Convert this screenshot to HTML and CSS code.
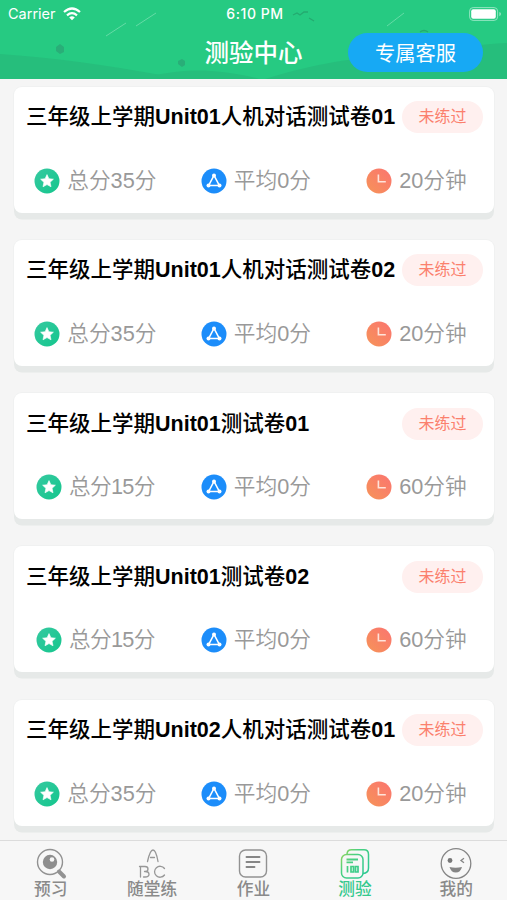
FILE: index.html
```html
<!DOCTYPE html>
<html lang="zh-CN">
<head>
<meta charset="utf-8">
<title>测验中心</title>
<link rel="stylesheet" href="styles.css">
</head>
<body>
<svg width="0" height="0" class="defs">
  <defs>
    <linearGradient id="gs" x1="0" y1="0" x2="1" y2="1"><stop offset="0" stop-color="#36c9a0"/><stop offset="1" stop-color="#14c68d"/></linearGradient>
    <linearGradient id="gc" x1="1" y1="0" x2="0" y2="1"><stop offset="0" stop-color="#fb7470"/><stop offset="1" stop-color="#f69458"/></linearGradient>
    <linearGradient id="gq" x1="0" y1="0" x2="28" y2="22" gradientUnits="userSpaceOnUse"><stop offset="0" stop-color="#b5d84b"/><stop offset=".45" stop-color="#4bd080"/><stop offset="1" stop-color="#2fc991"/></linearGradient>
    <symbol id="star" viewBox="0 0 26 26"><circle cx="13" cy="13" r="12.5" fill="url(#gs)"/><path d="M13 6.6l1.9 4.1 4.5.5-3.3 3.1.9 4.5-4-2.2-4 2.2.9-4.5-3.3-3.1 4.5-.5z" fill="#fff" stroke="#fff" stroke-width=".6" stroke-linejoin="round"/></symbol>
    <symbol id="avg" viewBox="0 0 26 26"><circle cx="13" cy="13" r="12.5" fill="#1c8dfa"/><path d="M13 7.4L7.6 17.6h10.8z" fill="none" stroke="#fff" stroke-width="1.5"/><g fill="#fff"><circle cx="13" cy="7.4" r="2"/><circle cx="7.5" cy="17.6" r="2"/><circle cx="18.5" cy="17.6" r="2"/></g></symbol>
    <symbol id="clock" viewBox="0 0 26 26"><circle cx="13" cy="13" r="12.5" fill="url(#gc)"/><path d="M12.4 6.6v7.2h7.4" fill="none" stroke="#ffe3da" stroke-width="1.6"/></symbol>
  </defs>
</svg>
<div class="screen">
  <header class="header">
    <svg class="scene" viewBox="0 0 507 79">
      <path d="M0 54C60 58 110 66 155 74L185 79H0z" fill="#26be7c"/>
      <path d="M155 75C185 70 210 67 260 79H160z" fill="#26be7c"/>
      <path d="M265 79C320 62 350 59 400 54S480 44 507 43V79z" fill="#26be7c"/>
      <path d="M106 36l20-13M136 26l20-13M387 26l17-13" stroke="#65dba6" stroke-width="1"/>
      <path d="M60 44l4 3v5l-4 2-4-3v-4zM182 59l3 2v4l-3 2-4-3v-3z" fill="#29ae78"/>
      <path d="M293 15l4-2 3 2 4-3 4 0M309 18l5 3M420 32q4-3 8 0" fill="none" stroke="#24aa70" stroke-width="1.3"/>
    </svg>
    <div class="status">
      <span class="carrier">Carrier<svg width="18" height="14" viewBox="0 0 18 14"><g fill="none" stroke="#fff" stroke-width="2.2"><path d="M1 5Q9-2 17 5M4 8.3q5-4.3 10 0"/></g><path d="M6.2 10.4q2.8-2.2 5.6 0L9 13.3z" fill="#fff"/></svg></span>
      <span class="time">6:10 PM</span>
      <svg class="battery" width="33" height="14" viewBox="0 0 33 14"><rect x=".6" y=".6" width="28" height="12.8" rx="3.5" fill="none" stroke="#92e5c1"/><rect x="2.2" y="2.2" width="24.6" height="9.6" rx="2" fill="#fff"/><path d="M30.3 5v4.2q1.7-.7 1.7-2.1t-1.7-2.1z" fill="#92e5c1"/></svg>
    </div>
    <div class="nav"><h1>测验中心</h1><button class="service">专属客服</button></div>
  </header>
  <main class="list">
    <article class="card"><div class="top"><h2>三年级上学期<b>Unit01</b>人机对话测试卷<b>01</b></h2><span class="tag">未练过</span></div>
      <div class="meta"><span><svg><use href="#star"/></svg>总分35分</span><span><svg><use href="#avg"/></svg>平均0分</span><span><svg><use href="#clock"/></svg>20分钟</span></div></article>
    <article class="card"><div class="top"><h2>三年级上学期<b>Unit01</b>人机对话测试卷<b>02</b></h2><span class="tag">未练过</span></div>
      <div class="meta"><span><svg><use href="#star"/></svg>总分35分</span><span><svg><use href="#avg"/></svg>平均0分</span><span><svg><use href="#clock"/></svg>20分钟</span></div></article>
    <article class="card"><div class="top"><h2>三年级上学期<b>Unit01</b>测试卷<b>01</b></h2><span class="tag">未练过</span></div>
      <div class="meta"><span class="tight"><svg><use href="#star"/></svg>总分15分</span><span><svg><use href="#avg"/></svg>平均0分</span><span><svg><use href="#clock"/></svg>60分钟</span></div></article>
    <article class="card"><div class="top"><h2>三年级上学期<b>Unit01</b>测试卷<b>02</b></h2><span class="tag">未练过</span></div>
      <div class="meta"><span class="tight"><svg><use href="#star"/></svg>总分15分</span><span><svg><use href="#avg"/></svg>平均0分</span><span><svg><use href="#clock"/></svg>60分钟</span></div></article>
    <article class="card"><div class="top"><h2>三年级上学期<b>Unit02</b>人机对话测试卷<b>01</b></h2><span class="tag">未练过</span></div>
      <div class="meta"><span><svg><use href="#star"/></svg>总分35分</span><span><svg><use href="#avg"/></svg>平均0分</span><span><svg><use href="#clock"/></svg>20分钟</span></div></article>
  </main>
  <nav class="tabs">
    <a class="tab"><svg viewBox="0 0 32 32"><circle cx="15" cy="14" r="12.5" fill="none" stroke="#929292" stroke-width="1.4"/><circle cx="15" cy="14" r="7.2" fill="#8e8e8e"/><circle cx="17" cy="11.5" r="2.3" fill="#f7f7f7"/><path d="M24 23.5l5 5" stroke="#929292" stroke-width="4" stroke-linecap="round"/></svg>预习</a>
    <a class="tab"><svg viewBox="0 0 32 32"><g fill="none" stroke="#979797" stroke-width="1.3" stroke-linecap="round"><path d="M11.5 13.5Q14 2 17 2t5 11.5M14.5 9.5h4"/><path d="M4.5 29V18.5M3.5 18.500H9Q12 18.500 12 21T9 23.500H8.500M9 23.500Q13 23.500 13 26.200T9 29H7.500"/><path d="M28.500 20.500A5.500 5.500 0 1 0 28.500 27"/></g></svg>随堂练</a>
    <a class="tab"><svg viewBox="0 0 32 32"><rect x="2.500" y="2" width="27" height="27" rx="6" fill="none" stroke="#929292" stroke-width="1.4"/><path d="M9.500 9h13M9.500 14h13M9.500 19h8" stroke="#868686" stroke-width="1.9" stroke-linecap="round"/></svg>作业</a>
    <a class="tab active"><svg viewBox="0 0 32 32"><g fill="none" stroke="url(#gq)" stroke-width="1.500"><path d="M8 6.500Q8 1.800 12.500 1.800H25Q29.500 1.800 29.500 6.500V20Q29.500 25 24 25.500"/><rect x="2.500" y="6.500" width="21.500" height="23.500" rx="5"/><path d="M7.500 11.500H19M7.500 14.300H14" stroke-width="1.800"/><path d="M8.500 18v6.500M12 18.500h2.500v5.500H12zM16.500 18.500H19v5.500h-2.500z" stroke-width="1.700"/></g></svg>测验</a>
    <a class="tab"><svg viewBox="0 0 32 32"><circle cx="16" cy="15.5" r="14.800" fill="none" stroke="#858585" stroke-width="1.300"/><circle cx="10" cy="12.5" r="2.400" fill="#777"/><path d="M24 10.300l-3 2.200 3 2.200" fill="none" stroke="#858585" stroke-width="1.300"/><path d="M9.500 19Q15.500 20.500 22 19Q20.500 24.500 15.800 24.500T9.500 19z" fill="#858585"/></svg>我的</a>
  </nav>
</div>
</body>
</html>
```

FILE: styles.css
```css
* { box-sizing: border-box; }
body { margin: 0; background: #f5f5f5; font-family: "Liberation Sans", "Noto Sans CJK SC", sans-serif; }
.defs { position: absolute; }
.screen { width: 507px; height: 900px; display: flex; flex-direction: column; overflow: hidden; }
.header { height: 79px; flex: none; position: relative; background: #26ca82; color: #fff; }
.scene { position: absolute; inset: 0; width: 507px; height: 79px; }
.status { position: relative; height: 27px; display: grid; grid-template-columns: 1fr auto 1fr; align-items: center; padding: 0 5px 0 8px; font: 14.5px/27px Inter, sans-serif; }
.carrier { display: flex; align-items: center; gap: 7px; }
.time { font-weight: 500; font-size: 14px; letter-spacing: .55px; }
.battery { justify-self: end; }
.nav { position: relative; height: 50px; display: grid; grid-template-columns: 1fr auto 1fr; align-items: center; padding: 0 24px; }
.nav h1 { grid-column: 2; margin: 0; font: 500 24.5px/38px "Noto Sans CJK SC", sans-serif; }
.service { justify-self: end; width: 135px; height: 39px; border: 0; border-radius: 20px; padding: 0; background: #17a9f4; color: #fff; font: 20.3px/37px "Noto Sans CJK SC", sans-serif; }
.list { flex: 1; min-height: 0; padding: 7.5px 13px 0 14px; display: flex; flex-direction: column; gap: 27.3px; overflow: hidden; }
.card { flex: none; height: 126px; background: #fff; border-radius: 8px; box-shadow: 0 6.5px 0 #e6e9e8, 0 0 0 1px #f0f1f1; padding-top: 13.5px; }
.top { display: flex; justify-content: space-between; align-items: center; height: 34px; padding: 0 11px 0 12px; }
.top h2 { margin: 0; font-size: 21.5px; line-height: 34px; font-weight: 500; color: #000; white-space: nowrap; }
.top b { font-weight: bold; }
.tag { width: 81px; height: 32px; flex: none; border-radius: 16px; background: #fff0ef; color: #fb806d; font-size: 16px; line-height: 32px; text-align: center; }
.meta { display: grid; grid-template-columns: repeat(3, 160.6px); margin: 30.5px -3px 0 1px; height: 32px; color: #999; font-size: 21.7px; font-weight: 350; line-height: 32px; }
.meta span { display: flex; justify-content: center; align-items: center; gap: 7px; white-space: nowrap; }
.meta svg { width: 26px; height: 26px; flex: none; }
.meta .tight { letter-spacing: -.7px; }
.tabs { flex: none; height: 60px; border-top: 1px solid #dcdcdc; background: #f7f7f7; display: grid; grid-template-columns: repeat(5, 1fr); }
.tab { display: flex; flex-direction: column; align-items: center; padding-top: 7px; color: #8a8a8a; font: 500 16.7px/16px "Noto Sans CJK SC", sans-serif; }
.tab svg { width: 32px; height: 32px; flex: none; }
.active { color: #35c98d; }
```
